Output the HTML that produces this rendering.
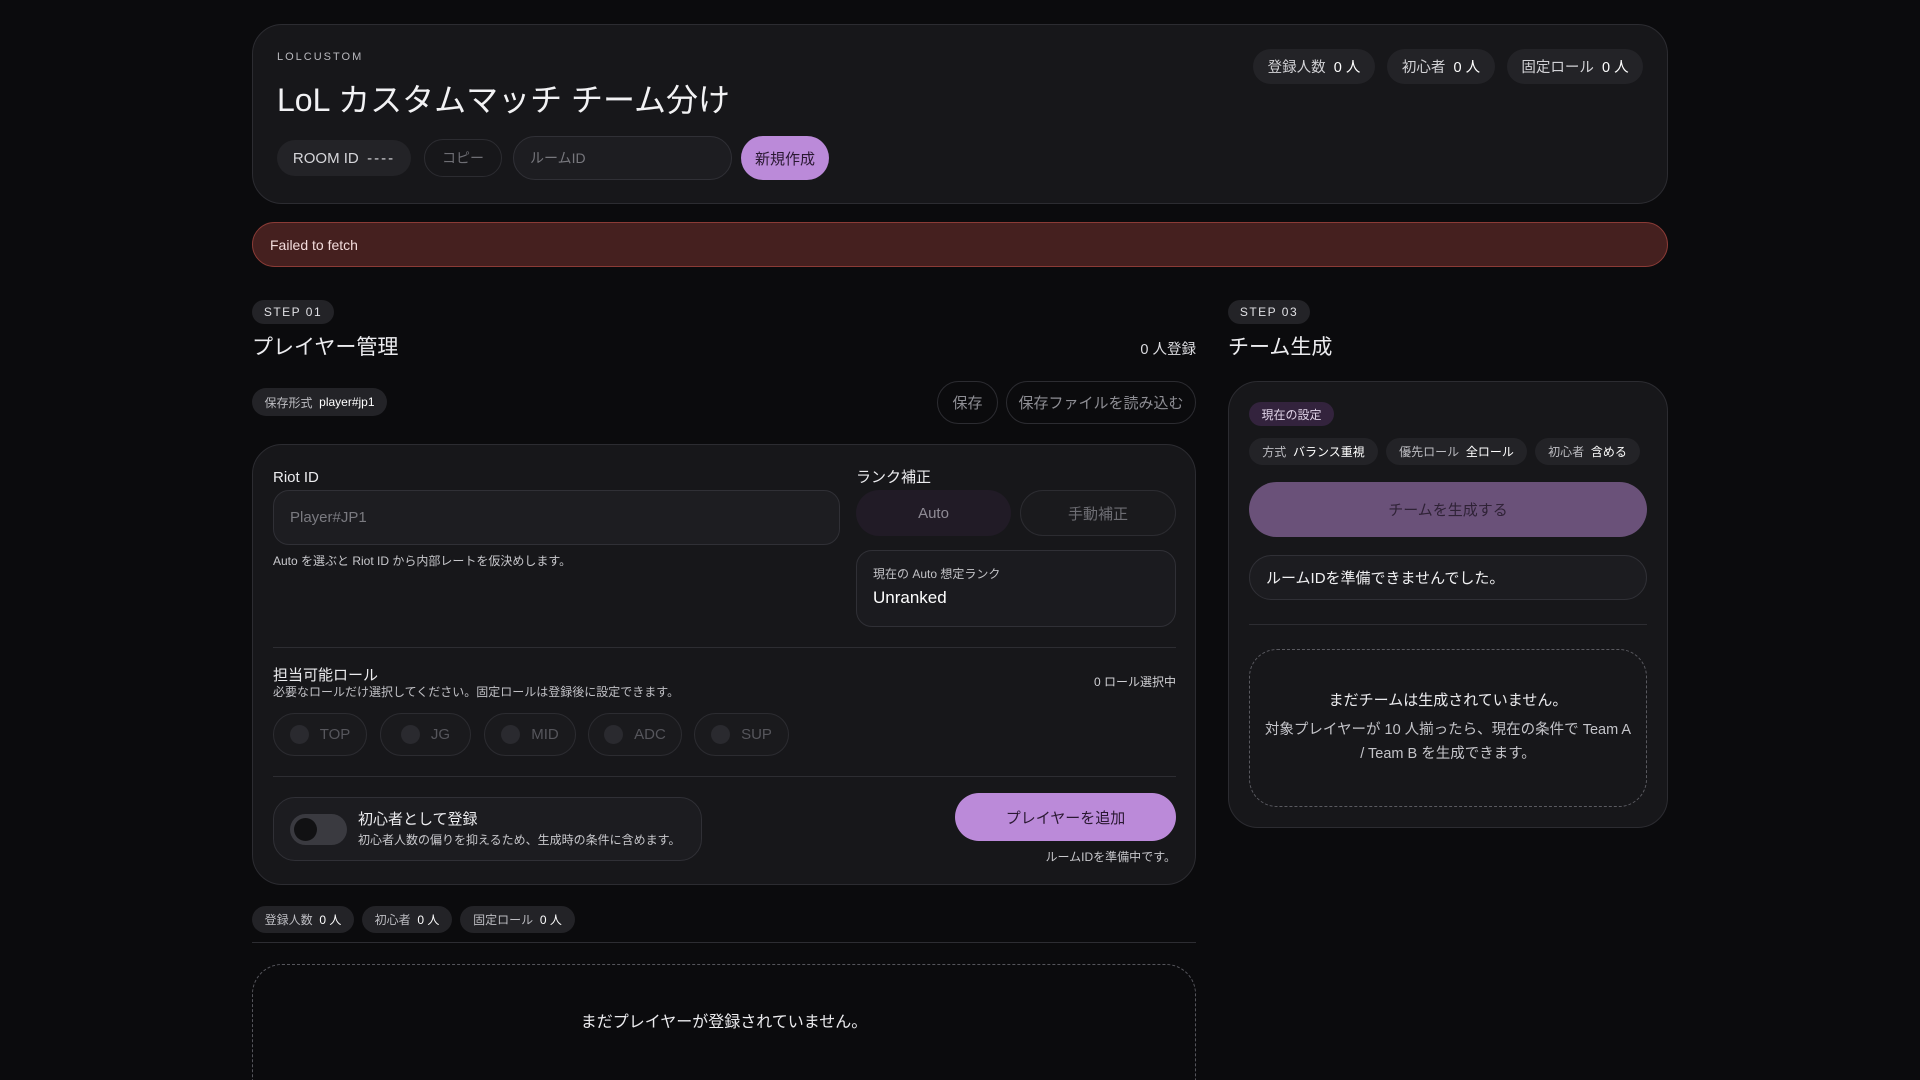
<!DOCTYPE html>
<html><head><meta charset="utf-8"><style>
*{box-sizing:border-box;margin:0;padding:0}
html,body{width:1920px;height:1080px;overflow:hidden}
body{background:#0b0b0d;color:#ececef;font-family:"Liberation Sans","Noto Sans CJK JP",sans-serif}
#w{position:relative;width:1920px;height:1080px;overflow:hidden}
.a{position:absolute}
.card{position:absolute;background:#17171a;border:1px solid #2c2c31;border-radius:30px}
.pill{position:absolute;border-radius:999px;display:flex;align-items:center;justify-content:center;white-space:nowrap}
.t{position:absolute;white-space:nowrap;line-height:1}
.dk{background:#232327}
.ol{border:1px solid #2c2c31}
.b{color:#fff}
</style></head><body><div id="w">
<div class="card" style="left:252px;top:24px;width:1416px;height:180px"></div>
<div class="t" style="left:277px;top:52px;font-size:11px;letter-spacing:2px;color:#b8b8bd">LOLCUSTOM</div>
<div class="t" style="left:277px;top:84px;font-size:32px;color:#f2f2f4">LoL カスタムマッチ チーム分け</div>
<div class="pill dk" style="left:277px;top:140px;width:134px;height:36px;font-size:15px;color:#d6d6da">ROOM ID&nbsp;&nbsp;<span style="letter-spacing:2px">----</span></div>
<div class="pill ol" style="left:424px;top:139px;width:78px;height:38px;font-size:14px;color:#6e6e74">コピー</div>
<div class="pill" style="left:513px;top:136px;width:219px;height:44px;background:#1d1d21;border:1px solid #303036;justify-content:flex-start;padding-left:16px;font-size:14px;color:#77777d">ルームID</div>
<div class="pill" style="left:741px;top:136px;width:88px;height:44px;background:#bb8ad9;font-size:15px;color:#2a1832">新規作成</div>
<div class="pill dk" style="left:1253px;top:49px;width:122px;height:35px;font-size:14.5px;color:#d2d2d6">登録人数&nbsp;&nbsp;<span class="b">0 人</span></div>
<div class="pill dk" style="left:1387px;top:49px;width:108px;height:35px;font-size:14.5px;color:#d2d2d6">初心者&nbsp;&nbsp;<span class="b">0 人</span></div>
<div class="pill dk" style="left:1507px;top:49px;width:136px;height:35px;font-size:14.5px;color:#d2d2d6">固定ロール&nbsp;&nbsp;<span class="b">0 人</span></div>

<div class="pill" style="left:252px;top:222px;width:1416px;height:45px;background:#45201f;border:1px solid #8b3b36;justify-content:flex-start;padding-left:17px;font-size:14px;color:#f3dcdc">Failed to fetch</div>

<div class="pill dk" style="left:252px;top:300px;width:82px;height:24px;font-size:12px;letter-spacing:1.5px;color:#e0e0e4">STEP 01</div>
<div class="t" style="left:252px;top:337px;font-size:21px">プレイヤー管理</div>
<div class="t" style="right:724px;top:343px;font-size:14.5px;color:#dcdce0">0 人登録</div>
<div class="pill dk" style="left:252px;top:388px;width:135px;height:28px;font-size:12px;color:#bdbdc2">保存形式&nbsp;&nbsp;<span class="b">player#jp1</span></div>
<div class="pill ol" style="left:937px;top:381px;width:61px;height:43px;font-size:15px;color:#8e8e94">保存</div>
<div class="pill ol" style="left:1006px;top:381px;width:190px;height:43px;font-size:15px;color:#8e8e94">保存ファイルを読み込む</div>

<div class="card" style="left:252px;top:444px;width:944px;height:441px"></div>
<div class="t" style="left:273px;top:470px;font-size:15px">Riot ID</div>
<div class="a" style="left:273px;top:490px;width:567px;height:55px;background:#1d1d21;border:1px solid #303036;border-radius:16px"></div>
<div class="t" style="left:290px;top:510px;font-size:15px;color:#7a7a80">Player#JP1</div>
<div class="t" style="left:273px;top:555px;font-size:12px;color:#c8c8cc">Auto を選ぶと Riot ID から内部レートを仮決めします。</div>
<div class="t" style="left:856px;top:470px;font-size:15px">ランク補正</div>
<div class="pill" style="left:856px;top:490px;width:155px;height:46px;background:#211b26;font-size:15px;color:#8f8b95">Auto</div>
<div class="pill ol" style="left:1020px;top:490px;width:156px;height:46px;background:#1a1a1d;font-size:15px;color:#6d6d73">手動補正</div>
<div class="a" style="left:856px;top:550px;width:320px;height:77px;background:#1b1b1f;border:1px solid #303036;border-radius:16px"></div>
<div class="t" style="left:873px;top:568px;font-size:12px;color:#c2c2c6">現在の Auto 想定ランク</div>
<div class="t" style="left:873px;top:589px;font-size:17px;color:#fff">Unranked</div>
<div class="a" style="left:273px;top:647px;width:903px;height:1px;background:#2d2d32"></div>
<div class="t" style="left:273px;top:668px;font-size:15px">担当可能ロール</div>
<div class="t" style="left:273px;top:686px;font-size:12px;color:#c0c0c5">必要なロールだけ選択してください。固定ロールは登録後に設定できます。</div>
<div class="t" style="right:744px;top:676px;font-size:12px;color:#d0d0d4">0 ロール選択中</div>
<div class="pill ol" style="left:273px;top:713px;width:94px;height:43px;background:#1a1a1d;font-size:15px;color:#56565c"><span style="width:19px;height:19px;border-radius:50%;background:#2a2a2f;margin-right:11px"></span>TOP</div>
<div class="pill ol" style="left:380px;top:713px;width:91px;height:43px;background:#1a1a1d;font-size:15px;color:#56565c"><span style="width:19px;height:19px;border-radius:50%;background:#2a2a2f;margin-right:11px"></span>JG</div>
<div class="pill ol" style="left:484px;top:713px;width:92px;height:43px;background:#1a1a1d;font-size:15px;color:#56565c"><span style="width:19px;height:19px;border-radius:50%;background:#2a2a2f;margin-right:11px"></span>MID</div>
<div class="pill ol" style="left:588px;top:713px;width:94px;height:43px;background:#1a1a1d;font-size:15px;color:#56565c"><span style="width:19px;height:19px;border-radius:50%;background:#2a2a2f;margin-right:11px"></span>ADC</div>
<div class="pill ol" style="left:694px;top:713px;width:95px;height:43px;background:#1a1a1d;font-size:15px;color:#56565c"><span style="width:19px;height:19px;border-radius:50%;background:#2a2a2f;margin-right:11px"></span>SUP</div>
<div class="a" style="left:273px;top:776px;width:903px;height:1px;background:#2d2d32"></div>
<div class="a" style="left:273px;top:797px;width:429px;height:64px;background:#1c1c20;border:1px solid #303036;border-radius:22px"></div>
<div class="a" style="left:290px;top:814px;width:57px;height:31px;border-radius:16px;background:#3a3a40"><div class="a" style="left:4px;top:4px;width:23px;height:23px;border-radius:50%;background:#111113"></div></div>
<div class="t" style="left:358px;top:812px;font-size:15px">初心者として登録</div>
<div class="t" style="left:358px;top:834px;font-size:12px;color:#c8c8cc">初心者人数の偏りを抑えるため、生成時の条件に含めます。</div>
<div class="pill" style="left:955px;top:793px;width:221px;height:48px;background:#bb8ad9;font-size:15px;color:#2a1832">プレイヤーを追加</div>
<div class="t" style="right:744px;top:851px;font-size:12px;color:#c8c8cc">ルームIDを準備中です。</div>

<div class="pill dk" style="left:252px;top:906px;width:102px;height:27px;font-size:12px;color:#bdbdc2">登録人数&nbsp;&nbsp;<span class="b">0 人</span></div>
<div class="pill dk" style="left:362px;top:906px;width:90px;height:27px;font-size:12px;color:#bdbdc2">初心者&nbsp;&nbsp;<span class="b">0 人</span></div>
<div class="pill dk" style="left:460px;top:906px;width:115px;height:27px;font-size:12px;color:#bdbdc2">固定ロール&nbsp;&nbsp;<span class="b">0 人</span></div>
<div class="a" style="left:252px;top:942px;width:944px;height:1px;background:#2d2d32"></div>
<div class="a" style="left:252px;top:964px;width:944px;height:160px;border:1px dashed #55555b;border-radius:30px"></div>
<div class="t" style="left:252px;width:944px;text-align:center;top:1015px;font-size:16px">まだプレイヤーが登録されていません。</div>

<div class="pill dk" style="left:1228px;top:300px;width:82px;height:24px;font-size:12px;letter-spacing:1.5px;color:#e0e0e4">STEP 03</div>
<div class="t" style="left:1228px;top:337px;font-size:21px">チーム生成</div>
<div class="card" style="left:1228px;top:381px;width:440px;height:447px"></div>
<div class="pill" style="left:1249px;top:402px;width:85px;height:24px;background:#33233d;font-size:12px;color:#e0d4e8">現在の設定</div>
<div class="pill dk" style="left:1249px;top:438px;width:129px;height:27px;font-size:12px;color:#bdbdc2">方式&nbsp;&nbsp;<span class="b">バランス重視</span></div>
<div class="pill dk" style="left:1386px;top:438px;width:141px;height:27px;font-size:12px;color:#bdbdc2">優先ロール&nbsp;&nbsp;<span class="b">全ロール</span></div>
<div class="pill dk" style="left:1535px;top:438px;width:105px;height:27px;font-size:12px;color:#bdbdc2">初心者&nbsp;&nbsp;<span class="b">含める</span></div>
<div class="pill" style="left:1249px;top:482px;width:398px;height:55px;background:#6a5179;font-size:15px;color:#2f2236">チームを生成する</div>
<div class="pill" style="left:1249px;top:555px;width:398px;height:45px;background:#1c1c20;border:1px solid #303036;justify-content:flex-start;padding-left:16px;font-size:15px;color:#f0f0f2">ルームIDを準備できませんでした。</div>
<div class="a" style="left:1249px;top:624px;width:398px;height:1px;background:#2d2d32"></div>
<div class="a" style="left:1249px;top:649px;width:398px;height:158px;border:1px dashed #5a5a60;border-radius:28px"></div>
<div class="t" style="left:1249px;width:398px;text-align:center;top:693px;font-size:15px">まだチームは生成されていません。</div>
<div style="position:absolute;left:1264px;width:368px;text-align:center;top:718px;font-size:14.5px;line-height:24px;color:#c4c4c9">対象プレイヤーが 10 人揃ったら、現在の条件で Team A / Team B を生成できます。</div>
</div></body></html>
